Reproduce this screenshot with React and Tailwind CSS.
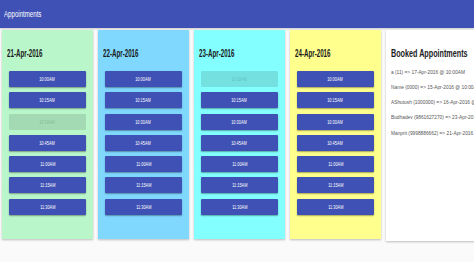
const days = [
  { date: "21-Apr-2016", bg: "bg-[#b9f6ca]", off: "bg-[#a3d9b3]", disabled: ["10:30AM"] },
  { date: "22-Apr-2016", bg: "bg-[#80d8ff]", off: "bg-[#71bfe0]", disabled: [] },
  { date: "23-Apr-2016", bg: "bg-[#84ffff]", off: "bg-[#74e0e0]", disabled: ["10:00AM"] },
  { date: "24-Apr-2016", bg: "bg-[#ffff8d]", off: "bg-[#e0e07c]", disabled: [] },
];

const slots = ["10:00AM", "10:15AM", "10:30AM", "10:45AM", "11:00AM", "11:15AM", "11:30AM"];

const booked = [
  "a (11) => 17-Apr-2016 @ 10:00AM",
  "Name (0000) => 15-Apr-2016 @ 10:00AM",
  "AShutosh (1000000) => 16-Apr-2016 @ 10:00AM",
  "Budhadev (9861627270) => 23-Apr-2016 @ 10:15AM",
  "Manprit (9998886662) => 21-Apr-2016 @ 10:30AM",
];

function DayCard({ d }) {
  return (
    <div className={`w-[91px] shrink-0 pt-[18px] pb-[24px] ${d.bg} shadow-[0_1px_2px_rgba(0,0,0,0.25)]`}>
      <h2 className="pl-[5px] text-[10px] leading-[12px] font-bold text-[#1a1a1a] whitespace-nowrap">
        <span className="inline-block origin-left scale-x-[0.62]">{d.date}</span>
      </h2>
      <div className="mt-[11px] mx-[7px] flex flex-col gap-[5.3px]">
        {slots.map((s) => {
          const off = d.disabled.includes(s);
          return (
            <button
              key={s}
              className={`h-[16px] flex items-center justify-center rounded-[1px] text-[6px] leading-none ${
                off
                  ? `${d.off} text-black/20`
                  : "bg-[#3f51b5] text-white shadow-[0_1px_1.5px_rgba(0,0,0,0.35)]"
              }`}
            >
              <span className="inline-block scale-x-[0.65]">{s}</span>
            </button>
          );
        })}
      </div>
    </div>
  );
}

export default function App() {
  return (
    <div className="w-[474px] h-[262px] overflow-hidden bg-[#fafafa] font-['Liberation_Sans',Arial,sans-serif]">
      <div className="h-[28px] bg-[#3f51b5] flex items-center pl-[4px] shadow-[0_1px_2px_rgba(0,0,0,0.2)]">
        <span className="inline-block origin-left scale-x-[0.72] text-[8.5px] text-white whitespace-nowrap">
          Appointments
        </span>
      </div>

      <div className="mt-[2px] pl-[2px] flex gap-[5px] items-start">
        {days.map((d) => (
          <DayCard key={d.date} d={d} />
        ))}

        <div className="w-[150px] shrink-0 h-[211px] pt-[18px] pl-[5px] bg-white shadow-[0_1px_2px_rgba(0,0,0,0.25)]">
          <h2 className="text-[10px] leading-[12px] font-bold text-[#1a1a1a] whitespace-nowrap">
            <span className="inline-block origin-left scale-x-[0.72]">Booked Appointments</span>
          </h2>
          <div className="mt-[4.5px] text-[6px] leading-[15.3px] text-[#555]">
            {booked.map((b) => (
              <div key={b} className="whitespace-nowrap">
                <span className="inline-block origin-left scale-x-[0.8]">{b}</span>
              </div>
            ))}
          </div>
        </div>
      </div>
    </div>
  );
}
